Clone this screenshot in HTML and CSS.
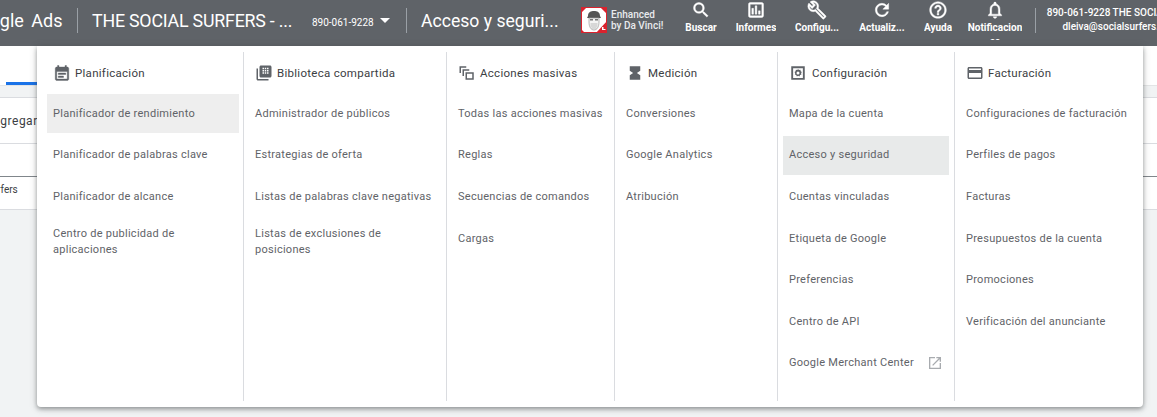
FILE: index.html
```html
<!DOCTYPE html>
<html lang="es">
<head>
<meta charset="utf-8">
<title>Acceso y seguridad</title>
<link rel="stylesheet" href="styles.css">
</head>
<body>
<header class="topbar">
  <div class="brand">Google Ads</div>
  <div class="vr"></div>
  <div class="account">THE SOCIAL SURFERS - ...</div>
  <div class="acc-id">890-061-9228</div>
  <svg class="caret" width="10" height="5" viewBox="0 0 10 5"><path d="M0 0h10L5 5z" fill="#fff"/></svg>
  <div class="vr"></div>
  <div class="page-title">Acceso y seguri...</div>
  <div class="ext">
    <svg class="ext-logo" width="26" height="26" viewBox="0 0 26 26">
      <rect width="26" height="26" fill="#fff"/>
      <path d="M0 0h6L0 6zM26 0v7l-7-7zM0 26v-4l4 4z" fill="#d9232e"/>
      <path d="M0 0h26v26H0z" fill="none" stroke="#d9232e" stroke-width="2"/>
      <path d="M26 14v12H15z" fill="#d9232e"/>
      <path d="M21 20h1.500v2h2v1H21z" fill="#fff"/>
      <path d="M7 9C7 5 10 4 13 4s6 1 6 5l1 2H6z" fill="#555"/>
      <path d="M8 11h10v4c0 5-2 8-5 8s-5-3-5-8z" fill="#f4f4f4" stroke="#999" stroke-width=".7"/>
      <path d="M9 12h3v1.500H9zM14 12h3v1.500h-3z" fill="#777"/>
      <path d="M9.500 17h7M9.500 19h7M10.500 21h5" stroke="#bbb" stroke-width="1"/>
    </svg>
    <div class="ext-text">Enhanced<br>by Da Vinci!</div>
  </div>
  <nav class="tools">
    <div class="tool t-buscar">
      <svg width="20" height="20" viewBox="0 0 24 24"><path d="M15.5 14h-.79l-.28-.27A6.47 6.47 0 0 0 16 9.5 6.5 6.5 0 1 0 9.5 16c1.61 0 3.09-.59 4.23-1.57l.27.28v.79l5 4.99L20.49 19l-4.99-5zm-6 0C7.01 14 5 11.99 5 9.5S7.01 5 9.5 5 14 7.01 14 9.5 11.99 14 9.5 14z"/></svg>
      <span>Buscar</span>
    </div>
    <div class="tool t-informes">
      <svg width="20" height="20" viewBox="0 0 24 24"><path d="M19 3H5c-1.100 0-2 .9-2 2v14c0 1.100.9 2 2 2h14c1.100 0 2-.9 2-2V5c0-1.100-.9-2-2-2zm0 16H5V5h14v14zM7 10h2v7H7zm4-3h2v10h-2zm4 6h2v4h-2z"/></svg>
      <span>Informes</span>
    </div>
    <div class="tool t-config">
      <svg width="20" height="20" viewBox="0 0 24 24"><path d="M22.610 18.990l-9.080-9.080c.93-2.340.45-5.100-1.440-7C9.790.61 6.210.4 3.660 2.250L7.500 6.080 6.080 7.500 2.250 3.660C.4 6.210.61 9.790 2.910 12.090c1.860 1.860 4.570 2.350 6.880 1.480l9.110 9.110c.39.39 1.020.39 1.410 0l2.300-2.300c.4-.38.4-1.020 0-1.390zm-3 1.600l-9.460-9.460c-.61.45-1.290.72-2 .82-1.360.2-2.790-.21-3.830-1.250C3.370 9.760 2.930 8.500 3 7.260l3.090 3.090 4.240-4.240-3.090-3.090c1.240-.07 2.490.37 3.440 1.310 1.080 1.080 1.490 2.570 1.240 3.960-.12.71-.42 1.370-.88 1.960l9.450 9.450-.88.89z"/></svg>
      <span>Configu...</span>
    </div>
    <div class="tool t-actual">
      <svg width="20" height="20" viewBox="0 0 24 24"><path d="M17.650 6.350A7.958 7.958 0 0 0 12 4c-4.420 0-7.990 3.580-7.990 8s3.570 8 7.990 8c3.730 0 6.840-2.550 7.730-6h-2.080A5.990 5.990 0 0 1 12 18c-3.310 0-6-2.690-6-6s2.690-6 6-6c1.660 0 3.140.69 4.220 1.780L13 11h7V4l-2.350 2.350z"/></svg>
      <span>Actualiz...</span>
    </div>
    <div class="tool t-ayuda">
      <svg width="20" height="20" viewBox="0 0 24 24"><path d="M11 18h2v-2h-2v2zm1-16C6.480 2 2 6.480 2 12s4.480 10 10 10 10-4.480 10-10S17.520 2 12 2zm0 18c-4.410 0-8-3.590-8-8s3.590-8 8-8 8 3.590 8 8-3.590 8-8 8zm0-14c-2.210 0-4 1.790-4 4h2c0-1.100.9-2 2-2s2 .9 2 2c0 2-3 1.750-3 5h2c0-2.250 3-2.500 3-5 0-2.210-1.790-4-4-4z"/></svg>
      <span>Ayuda</span>
    </div>
    <div class="tool t-notif">
      <svg width="20" height="20" viewBox="0 0 24 24"><path d="M12 22c1.100 0 2-.9 2-2h-4c0 1.100.9 2 2 2zm6-6v-5c0-3.070-1.630-5.640-4.500-6.320V4c0-.83-.67-1.500-1.500-1.500s-1.500.67-1.500 1.500v.68C7.640 5.360 6 7.920 6 11v5l-2 2v1h16v-1l-2-2zm-2 1H8v-6c0-2.480 1.510-4.500 4-4.500s4 2.020 4 4.500v6z"/></svg>
      <span>Notificacion<br>es</span>
    </div>
  </nav>
  <div class="vr vr-user"></div>
  <div class="user">
    <div>890-061-9228 THE SOCIAL SURFERS</div>
    <div class="mail">dleiva@socialsurfers.com</div>
  </div>
</header>

<main class="behind">
  <div class="tabs"><div class="tab-active"></div></div>
  <div class="strip"></div>
  <div class="row-add"><span class="row-add-text">Agregar</span></div>
  <div class="row-blank"></div>
  <div class="row-user"><span class="row-user-text">socialsurfers</span></div>
</main>

<section class="menu">
  <div class="col col-1">
    <h2 class="head">
      <svg class="ic" width="18" height="18" viewBox="0 0 24 24"><path fill="#5f6368" stroke="#5f6368" stroke-width=".5" d="M19 4h-1V2h-2v2H8V2H6v2H5c-1.100 0-2 .9-2 2v14c0 1.100.9 2 2 2h14c1.100 0 2-.9 2-2V6c0-1.100-.9-2-2-2zm0 16H5V10h14v10zM7 12h10v2H7zm0 4h7v2H7z"/></svg>
      Planificación
    </h2>
    <a class="item sel">Planificador de rendimiento</a>
    <a class="item">Planificador de palabras clave</a>
    <a class="item">Planificador de alcance</a>
    <a class="item">Centro de publicidad de aplicaciones</a>
  </div>
  <div class="col col-2">
    <h2 class="head">
      <svg class="ic" width="18" height="18" viewBox="0 0 24 24"><path fill="#5f6368" fill-rule="evenodd" d="M4 6H2v14c0 1.100.9 2 2 2h14v-2H4V6zm16-4H8c-1.100 0-2 .9-2 2v12c0 1.100.9 2 2 2h12c1.100 0 2-.9 2-2V4c0-1.100-.9-2-2-2zM10 5h2v2h-2zm3 0h2v2h-2zm3 0h2v2h-2zm-6 3h2v2h-2zm3 0h2v2h-2zm3 0h2v2h-2zm-6 3h2v2h-2zm3 0h2v2h-2zm3 0h2v2h-2z"/></svg>
      Biblioteca compartida
    </h2>
    <a class="item">Administrador de públicos</a>
    <a class="item">Estrategias de oferta</a>
    <a class="item">Listas de palabras clave negativas</a>
    <a class="item">Listas de exclusiones de posiciones</a>
  </div>
  <div class="col col-3">
    <h2 class="head">
      <svg class="ic" width="18" height="18" viewBox="0 0 24 24"><path fill="#5f6368" fill-rule="evenodd" d="M2 3h9v2H4v7H2zm4 4h9v2H8v7H6zm4 4h11v10H10zm2 2v6h7v-6z"/></svg>
      Acciones masivas
    </h2>
    <a class="item">Todas las acciones masivas</a>
    <a class="item">Reglas</a>
    <a class="item">Secuencias de comandos</a>
    <a class="item">Cargas</a>
  </div>
  <div class="col col-4">
    <h2 class="head">
      <svg class="ic" width="18" height="18" viewBox="0 0 24 24"><path fill="#5f6368" d="M5 3h14v6l-4.500 3 4.500 3v6H5v-6l4.500-3L5 9z"/></svg>
      Medición
    </h2>
    <a class="item">Conversiones</a>
    <a class="item">Google Analytics</a>
    <a class="item">Atribución</a>
  </div>
  <div class="col col-5">
    <h2 class="head">
      <svg class="ic" width="18" height="18" viewBox="0 0 24 24"><path fill="#5f6368" fill-rule="evenodd" d="M3 3h18v18H3zm2.500 2.500v13h13v-13zM12 6.500l1.300 1.400 1.900-.2.400 1.800 1.500 1.200-1 1.600.5 1.800-1.800.7-.9 1.700-1.700-.8-1.700.8-.9-1.700-1.800-.7.500-1.800-1-1.600 1.500-1.200.4-1.800 1.900.2zM12 10a2 2 0 1 0 0 4 2 2 0 0 0 0-4z"/></svg>
      Configuración
    </h2>
    <a class="item">Mapa de la cuenta</a>
    <a class="item sel-dark">Acceso y seguridad</a>
    <a class="item">Cuentas vinculadas</a>
    <a class="item">Etiqueta de Google</a>
    <a class="item">Preferencias</a>
    <a class="item">Centro de API</a>
    <a class="item item-ext">Google Merchant Center
      <svg width="16" height="16" viewBox="0 0 24 24"><path fill="#a8abaf" d="M19 19H5V5h7V3H3v18h18v-9h-2v7zM14 3v2h3.590l-9.830 9.830 1.410 1.410L19 6.410V10h2V3h-7z"/></svg>
    </a>
  </div>
  <div class="col col-6">
    <h2 class="head">
      <svg class="ic" width="18" height="18" viewBox="0 0 24 24"><path fill="#5f6368" d="M20 4H4c-1.100 0-2 .9-2 2v12c0 1.100.9 2 2 2h16c1.100 0 2-.9 2-2V6c0-1.100-.9-2-2-2zm0 14H4v-6h16v6zm0-10H4V6h16v2z"/></svg>
      Facturación
    </h2>
    <a class="item">Configuraciones de facturación</a>
    <a class="item">Perfiles de pagos</a>
    <a class="item">Facturas</a>
    <a class="item">Presupuestos de la cuenta</a>
    <a class="item">Promociones</a>
    <a class="item">Verificación del anunciante</a>
  </div>
</section>
</body>
</html>
```

FILE: styles.css
```css
* { box-sizing: border-box; }
html, body { margin: 0; height: 100%; }
body {
  width: 1157px;
  height: 417px;
  overflow: hidden;
  background: #f1f3f4;
  font-family: Roboto, "Liberation Sans", sans-serif;
  position: relative;
}

/* top bar */
.topbar {
  height: 46px;
  padding-bottom: 5px;
  background: #5f6368;
  color: #fff;
  display: flex;
  align-items: center;
  overflow: hidden;
  white-space: nowrap;
}
.brand { font-size: 18px; margin-left: -33px; width: 110px; flex: none; word-spacing: 3px; }
.vr { width: 1px; height: 25px; background: #9aa0a6; flex: none; }
.account { font-size: 17.8px; letter-spacing: -.2px; margin-left: 14px; width: 220px; flex: none; }
.acc-id { font-size: 10px; margin-top: 3px; width: 68px; flex: none; }
.caret { flex: none; margin-right: 16px; }
.page-title { font-size: 17.6px; margin-left: 14px; width: 160px; flex: none; }
.ext { display: flex; align-items: center; gap: 4px; width: 93px; flex: none; margin-top: -1px; }
.ext-logo { flex: none; }
.ext-text { font-size: 10px; line-height: 11.5px; font-weight: 500; color: #e8eaed; }
.tools { display: flex; flex: none; align-self: flex-start; }
.tool {
  display: flex;
  flex-direction: column;
  align-items: center;
  font-size: 10px;
  font-weight: 700;
  line-height: 14px;
  text-align: center;
  flex: none;
}
.tool span { margin-top: 1px; height: 19px; overflow: hidden; }
.tool svg { flex: none; fill: #fff; stroke: #fff; stroke-width: .5; }
.t-buscar { width: 54px; }
.t-informes { width: 56px; }
.t-config { width: 66px; }
.t-actual { width: 64px; }
.t-ayuda { width: 48px; }
.t-notif { width: 66px; }
.vr-user { margin-left: 7px; }
.user { margin-left: 9px; margin-top: -1px; font-size: 10px; line-height: 14.5px; text-align: center; font-weight: 500; width: 170px; flex: none; }
.mail { margin-left: -19px; }

/* page behind the menu */
.behind { height: 371px; overflow: hidden; }
.tabs { height: 39px; background: #fff; display: flex; align-items: flex-end; }
.tab-active { width: 31px; height: 3px; margin-left: 6px; background: #1a73e8; }
.strip { height: 13px; background: #f1f3f4; border-top: 1px solid #e3e5e6; border-bottom: 1px solid #dadce0; }
.row-add {
  height: 46px;
  background: #fff;
  border-bottom: 1px solid #dadce0;
  font-size: 12px;
  line-height: 47px;
  color: #3c4043;
  overflow: hidden;
  white-space: nowrap;
}
.row-add-text { margin-left: -8px; letter-spacing: .5px; }
.row-blank { height: 33px; background: #fff; border-bottom: 1px solid #80868b; }
.row-user {
  height: 33px;
  background: #fff;
  border-bottom: 1px solid #dadce0;
  font-size: 10px;
  line-height: 26px;
  color: #3c4043;
  overflow: hidden;
  white-space: nowrap;
}
.row-user-text { margin-left: -40px; }

/* mega menu */
.menu {
  position: absolute;
  left: 37px;
  top: 46px;
  width: 1106px;
  height: 361px;
  background: #fff;
  border-radius: 0 0 4px 4px;
  box-shadow: 0 2px 4px rgba(60, 64, 67, .45), 0 1px 8px rgba(60, 64, 67, .2);
  padding: 6px 0;
  display: flex;
}
.col {
  flex: none;
  height: 349px;
  border-right: 1px solid #dadce0;
  padding: 0 4px 0 5px;
}
.col-1 { width: 207px; padding-left: 10px; }
.col-2 { width: 203px; }
.col-3 { width: 168px; }
.col-4 { width: 163px; }
.col-5 { width: 177px; padding-right: 5px; }
.col-6 { width: 188px; border-right: 0; }
.head {
  margin: 0;
  height: 42.4px;
  display: flex;
  align-items: center;
  gap: 4px;
  padding-left: 6px;
  font-size: 11.5px;
  font-weight: 400;
  letter-spacing: .28px;
  color: #3c4043;
}
.col-5 .head { gap: 5px; }
.ic { flex: none; }
.item {
  display: flex;
  align-items: center;
  min-height: 39px;
  margin-bottom: 2.6px;
  padding: 7px 6px;
  font-size: 11px;
  line-height: 16px;
  letter-spacing: .27px;
  color: #5f6368;
}
.sel { background: #eeeeee; }
.sel-dark { background: #e8eaea; }
.item-ext { justify-content: space-between; white-space: nowrap; }
```
